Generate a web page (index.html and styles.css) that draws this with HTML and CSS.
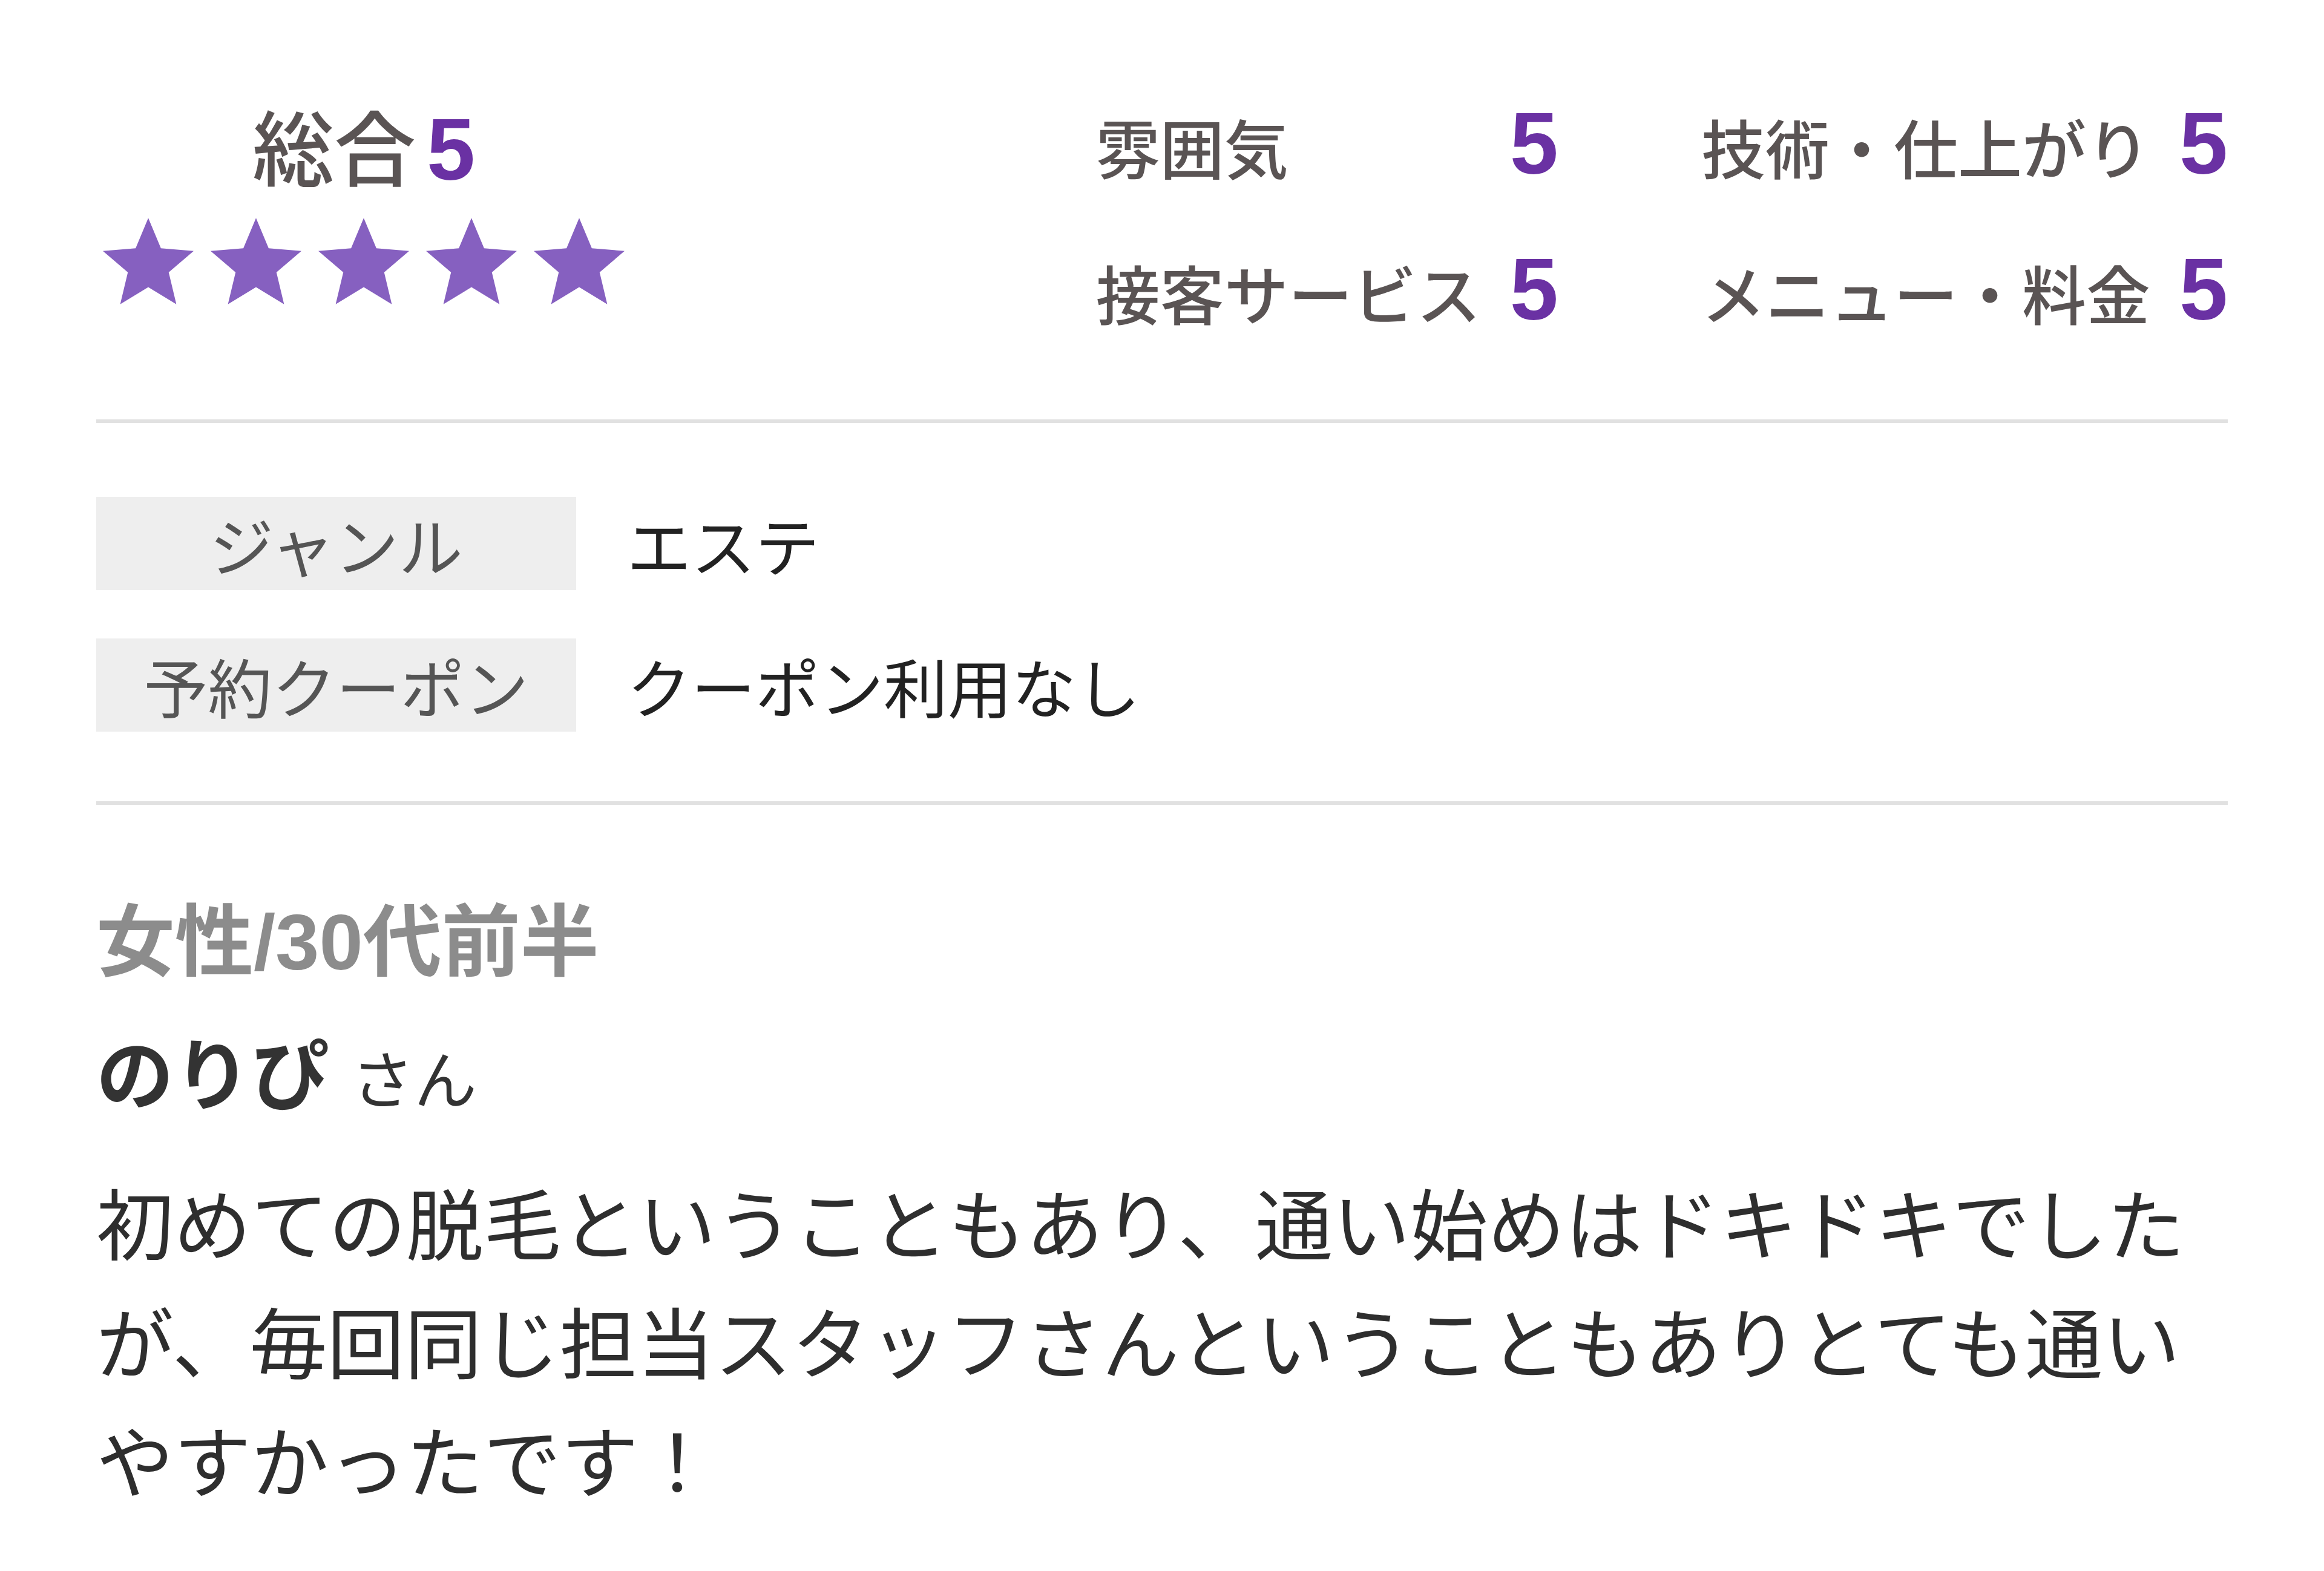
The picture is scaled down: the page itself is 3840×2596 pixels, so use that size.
FILE: index.html
```html
<!DOCTYPE html>
<html lang="ja">
<head>
<meta charset="utf-8">
<title>口コミ</title>
<link rel="stylesheet" href="styles.css">
</head>
<body>
<svg class="sprite" aria-hidden="true">
  <symbol id="star" viewBox="-95.1 -100 190.2 180.9">
    <polygon points="0,-100 26.5,-36.4 95.1,-30.9 42.8,13.9 58.8,80.9 0,45 -58.8,80.9 -42.8,13.9 -95.1,-30.9 -26.5,-36.4"/>
  </symbol>
</svg>
<main class="review">
  <section class="summary">
    <div class="overall">
      <div class="overall-title">総合<span class="score">5</span></div>
      <div class="stars">
        <svg class="star"><use href="#star"/></svg>
        <svg class="star"><use href="#star"/></svg>
        <svg class="star"><use href="#star"/></svg>
        <svg class="star"><use href="#star"/></svg>
        <svg class="star"><use href="#star"/></svg>
      </div>
    </div>
    <div class="ratings">
      <span class="rating-label">雰囲気</span><span class="score rating-score">5</span>
      <span class="rating-label rating-label-right">技術・仕上がり</span><span class="score rating-score">5</span>
      <span class="rating-label">接客サービス</span><span class="score rating-score">5</span>
      <span class="rating-label rating-label-right">メニュー・料金</span><span class="score rating-score">5</span>
    </div>
  </section>

  <hr class="divider divider-top">

  <dl class="meta">
    <dt class="meta-label">ジャンル</dt>
    <dd class="meta-value">エステ</dd>
    <dt class="meta-label">予約クーポン</dt>
    <dd class="meta-value">クーポン利用なし</dd>
  </dl>

  <hr class="divider divider-bottom">

  <section class="reviewer">
    <p class="reviewer-attr">女性/30代前半</p>
    <p class="reviewer-name">のりぴ <span class="honorific">さん</span></p>
  </section>

  <p class="comment">初めての脱毛ということもあり、通い始めはドキドキでしたが、毎回同じ担当スタッフさんということもありとても通いやすかったです！</p>
</main>
</body>
</html>
```

FILE: styles.css
```css
* {
  box-sizing: border-box;
  margin: 0;
  padding: 0;
}

html, body {
  background: #ffffff;
}

body {
  font-family: "Noto Sans CJK JP", sans-serif;
  color: #333333;
}

.sprite {
  position: absolute;
  width: 0;
  height: 0;
  overflow: hidden;
}

.review {
  width: 3840px;
  padding: 163px 159px 0;
}

/* ---------- summary ---------- */
.summary {
  display: flex;
  justify-content: space-between;
  align-items: flex-start;
}

.overall {
  display: flex;
  flex-direction: column;
  align-items: center;
  margin-left: 11px;
}

.overall-title {
  font-size: 135px;
  line-height: 150px;
  font-weight: 500;
  color: #5a5454;
  white-space: nowrap;
}

.score {
  font-family: "Liberation Sans", "Noto Sans CJK JP", sans-serif;
  font-weight: 700;
  font-size: 144px;
  color: #6a31a3;
}

.overall-title .score {
  margin-left: 18px;
}

.stars {
  display: flex;
  gap: 28px;
  margin-top: 37px;
}

.star {
  width: 150px;
  height: 143px;
  fill: #8660c0;
}

.ratings {
  display: grid;
  grid-template-columns: auto auto auto auto;
  row-gap: 88px;
  align-items: baseline;
}

.rating-label {
  font-size: 106px;
  line-height: 150px;
  font-weight: 500;
  color: #5a5454;
  white-space: nowrap;
}

.rating-label-right {
  padding-left: 236px;
}

.rating-score {
  padding-left: 48px;
  line-height: 150px;
}

/* ---------- dividers ---------- */
.divider {
  border: 0;
  height: 6px;
  background: #e1e1e1;
}

.divider-top {
  margin-top: 136px;
}

.divider-bottom {
  margin-top: 115px;
}

/* ---------- meta ---------- */
.meta {
  margin-top: 122px;
  display: grid;
  grid-template-columns: 793px 1fr;
  column-gap: 84px;
  row-gap: 80px;
}

.meta-label {
  background: #eeeeee;
  text-align: center;
  font-size: 106px;
  line-height: 154px;
  color: #555555;
}

.meta-value {
  font-size: 106px;
  line-height: 154px;
  color: #222222;
}

/* ---------- reviewer ---------- */
.reviewer-attr {
  margin-top: 152px;
  font-family: "Liberation Sans", "Noto Sans CJK JP", sans-serif;
  font-weight: 700;
  font-size: 130px;
  line-height: 150px;
  color: #8c8c8c;
}

.reviewer-name {
  margin-top: 62px;
  font-size: 128px;
  line-height: 150px;
  font-weight: 600;
  color: #333333;
}

.honorific {
  font-size: 104px;
  font-weight: 400;
  margin-left: 8px;
}

/* ---------- comment ---------- */
.comment {
  margin-top: 66px;
  font-size: 128px;
  line-height: 196px;
  color: #2e2e2e;
}
```
